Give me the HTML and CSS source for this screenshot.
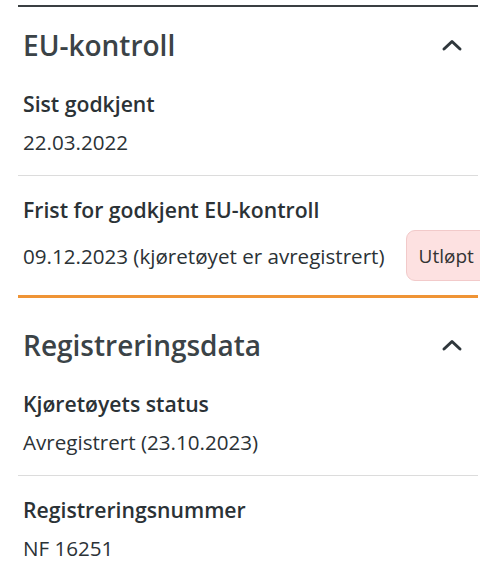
FILE: index.html
```html
<!DOCTYPE html>
<html lang="no">
<head>
    <meta charset="UTF-8">
    <meta name="viewport" content="width=device-width, initial-scale=1.0">
    <title>Kjøretøyopplysninger</title>
    <link rel="stylesheet" href="styles.css">
</head>
<body>

<!-- EU-kontroll -->
<section class="panel panel-first">
    <div class="panel-head">
        <h2>EU-kontroll</h2>
        <svg class="chevron" width="22" height="14" viewBox="0 0 22 14"><path d="M3 11 L11 3.5 L19 11" fill="none" stroke="#2f373c" stroke-width="3" stroke-linecap="round" stroke-linejoin="round"/></svg>
    </div>
    <div class="field">
        <div class="label">Sist godkjent</div>
        <div class="value">22.03.2022</div>
    </div>
    <div class="field field-badge">
        <div class="label">Frist for godkjent EU-kontroll</div>
        <div class="value-row">
            <span class="value">09.12.2023 (kjøretøyet er avregistrert)</span>
            <span class="badge">Utløpt</span>
        </div>
    </div>
</section>

<!-- Registreringsdata -->
<section class="panel panel-second">
    <div class="panel-head">
        <h2>Registreringsdata</h2>
        <svg class="chevron" width="22" height="14" viewBox="0 0 22 14"><path d="M3 11 L11 3.5 L19 11" fill="none" stroke="#2f373c" stroke-width="3" stroke-linecap="round" stroke-linejoin="round"/></svg>
    </div>
    <div class="field">
        <div class="label">Kjøretøyets status</div>
        <div class="value">Avregistrert (23.10.2023)</div>
    </div>
    <div class="field">
        <div class="label">Registreringsnummer</div>
        <div class="value">NF 16251</div>
    </div>
</section>

</body>
</html>
```

FILE: styles.css
```css
* {
    box-sizing: border-box;
}
body {
    margin: 0;
    padding: 5px 2px 0 18px;
    background: #fff;
    font-family: "Open Sans", Lato, sans-serif;
    color: #2b3236;
    overflow: hidden;
}
.panel-first {
    border-top: 2px solid #3a3f42;
    padding-top: 21px;
    border-bottom: 3px solid #ef9435;
}
.panel-second {
    padding-top: 30px;
}
.panel-head {
    display: flex;
    align-items: center;
    justify-content: space-between;
    padding: 0 15px 0 5px;
    height: 34px;
    margin-bottom: 28px;
}
h2 {
    margin: 0;
    font-size: 28px;
    font-weight: 600;
    line-height: 34px;
    color: #3b4347;
}
.field {
    padding: 0 0 19px 5px;
    border-bottom: 1px solid #dcdcdc;
}
.field + .field {
    padding-top: 20px;
}
.panel .field:last-child {
    border-bottom: none;
}
.field-badge {
    padding-bottom: 14px;
}
.label {
    font-size: 21.2px;
    font-weight: 600;
    line-height: 28px;
    margin-bottom: 10px;
}
.value {
    font-size: 20.6px;
    line-height: 28px;
}
.field-badge .label {
    margin-bottom: 6px;
}
.value-row {
    display: flex;
    align-items: center;
    gap: 21px;
    white-space: nowrap;
}
.badge {
    flex-shrink: 0;
    height: 51px;
    display: flex;
    align-items: center;
    padding: 0 14px 0 12px;
    background: #fde1e1;
    border: 1px solid #f2caca;
    border-radius: 9px;
    font-size: 19px;
    color: #333;
}
```
